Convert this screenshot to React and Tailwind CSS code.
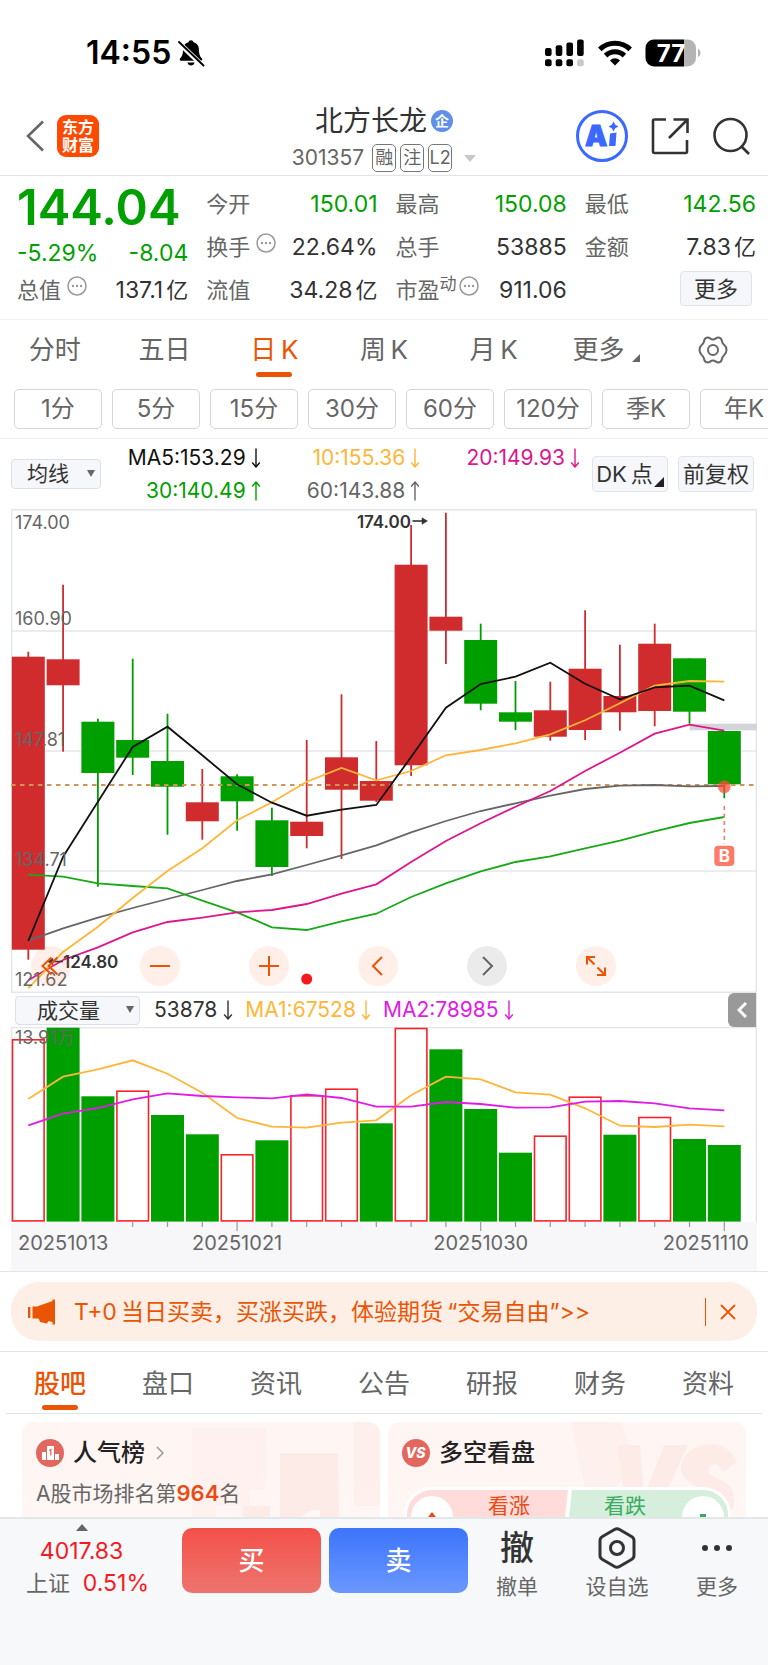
import React from "react";

const RED = "#d02c2e";
const GREEN = "#009f00";
const STEP = 34.8;
const FIRST = 17.3;
const cx = (i) => FIRST + STEP * i;

// [direction, high, body top, body bottom, low]
const candles = [
  ["r", 142.7, 147.7, 440.7, 450.7],
  ["r", 75.7, 150.3, 176.3, 242.7],
  ["g", 209.7, 212.7, 264, 377.7],
  ["g", 149.7, 231, 248.7, 266],
  ["g", 204.7, 252, 277.7, 325.7],
  ["r", 260, 293.3, 312.3, 330.7],
  ["g", 265.3, 267.3, 292.3, 321.7],
  ["g", 298.7, 311.3, 358, 367],
  ["r", 231, 312.7, 327, 339.3],
  ["r", 185.3, 248.3, 280.7, 350],
  ["r", 232, 272, 291.7, 293],
  ["r", 16, 55.7, 256.3, 267],
  ["r", 3.7, 107.7, 121.7, 155],
  ["g", 114.7, 131, 194.7, 201.3],
  ["g", 172, 203.3, 212.7, 221],
  ["r", 172.7, 201.3, 227.7, 231.7],
  ["r", 101.3, 159.7, 221, 231],
  ["r", 135.7, 187, 203.3, 221.7],
  ["r", 114.7, 134.7, 202, 217.3],
  ["g", 149.3, 149.3, 202.7, 214.7],
  ["g", 222, 222, 275.3, 289.3],
];

const priceLines = [
  ["#666666", [431.7, 419.3, 408.7, 399, 390, 381, 372, 365.3, 356, 346.3, 336.3, 323.3, 312, 302, 294.3, 286.7, 280, 276.7, 276, 277.3, 277]],
  ["#18a818", [365.7, 367.7, 374.3, 377, 379.3, 391.7, 403.3, 418.3, 421, 412.3, 404.7, 388, 374.3, 362.3, 353, 347.3, 339.3, 331.7, 322.3, 314, 308]],
  ["#e0148c", [471.3, 451, 438.3, 423.3, 413, 408.7, 403.3, 401, 395, 384.7, 375.3, 353, 332, 314.3, 297.7, 282, 262, 243.7, 224.7, 215.7, 221.7]],
  ["#ffb638", [479.3, 443, 417.7, 389, 362, 339.3, 311.3, 293.3, 272.7, 259, 271.3, 262, 246.3, 241, 234.3, 225.3, 211.3, 194.3, 176.7, 172, 172.7]],
  ["#111111", [432, 347.7, 292.7, 238, 217.7, 246.3, 275.3, 293.7, 306.7, 300.7, 296, 248, 198.7, 175, 167.7, 153.7, 174.7, 190.3, 178.3, 176.7, 191.3]],
];

const volumes = [
  ["r", 12.3], ["g", 0.7], ["g", 69.3], ["r", 63.7], ["g", 88], ["g", 107.3], ["r", 127.3],
  ["g", 113.3], ["r", 68.3], ["r", 61.7], ["g", 96.3], ["r", 1], ["g", 22.3], ["g", 82],
  ["g", 125.7], ["r", 108.7], ["r", 69.7], ["g", 107.7], ["r", 90], ["g", 112], ["g", 118],
];

const volumeLines = [
  ["#ffb638", [72, 49.7, 42.3, 33.3, 46.7, 65.7, 91, 99.7, 100.7, 95.7, 93.3, 68.3, 49.7, 52.3, 65.3, 67.7, 81.3, 98.7, 100, 97.7, 99.3]],
  ["#e01be6", [98.3, 86.7, 81, 72.3, 66.3, 69, 70.3, 71.3, 67.3, 71, 79.7, 79.7, 75, 77, 80.7, 80.3, 74.7, 74, 76.3, 81.3, 83.3]],
];

const toPoints = (ys) => ys.map((y, i) => `${cx(i)},${y}`).join(" ");

function Arrow({ up }) {
  return (
    <svg viewBox="0 0 10 20" className="h-5 w-[10px] shrink-0" fill="none" stroke="currentColor" strokeWidth="1.4">
      <path d={up ? "M5 19.5V1M1.2 5.5 5 1l3.8 4.5" : "M5 .5V19M1.2 14.5 5 19l3.8-4.5"} />
    </svg>
  );
}

function StatusBar() {
  return (
    <div className="flex h-[99px] items-center justify-between pt-[7px] pr-[67px] pl-[86px]">
      <div className="flex items-center gap-1.5">
        <span className="text-[32px] leading-8 font-semibold text-black">14:55</span>
        <svg viewBox="0 0 28 28" className="size-7" fill="#000">
          <path d="M14 1.2c-1.4 0-2.3.9-2.5 2C8 4.100 6 7 6 11c0 4.800-1.200 6.700-2.800 8.300-.9.9-.4 2.500.9 2.500h19.800c1.300 0 1.800-1.600.9-2.500C23.200 17.700 22 15.800 22 11c0-4-2-6.900-5.500-7.800-.2-1.100-1.100-2-2.500-2zM10.400 23.600c.5 1.800 1.900 3 3.600 3s3.100-1.200 3.600-3z" />
          <path d="M1.500 3.500 25.500 26.500" stroke="#fff" strokeWidth="5" />
          <path d="M2 3 26.500 26.500" stroke="#000" strokeWidth="1.900" strokeLinecap="round" />
        </svg>
      </div>
      <div className="flex items-center gap-[13px]">
        <svg viewBox="0 0 40 28" className="h-7 w-10">
          <rect x="0" y="9" width="6.600" height="8" rx="2" />
          <rect x="10.700" y="6.300" width="6.600" height="10.700" rx="2" />
          <rect x="21.400" y="3.500" width="6.600" height="13.500" rx="2" />
          <rect x="32.100" y="0.600" width="6.600" height="16.400" rx="2" />
          <rect x="0" y="20.300" width="6.600" height="7" rx="2" />
          <rect x="10.700" y="20.300" width="6.600" height="7" rx="2" />
          <rect x="21.400" y="20.300" width="6.600" height="7" rx="2" />
          <rect x="32.100" y="20.300" width="6.600" height="7" rx="2" fill="#c8c8c8" />
        </svg>
        <svg viewBox="0 0 34 26" className="h-[26px] w-[34px]" fill="none" stroke="#000" strokeWidth="5">
          <path d="M1.800 9.400a21.800 21.800 0 0 1 30.400 0" />
          <path d="M7.600 15.600a13.400 13.400 0 0 1 18.800 0" />
          <path d="M17 25.600l-5-5.200a7 7 0 0 1 10 0z" fill="#000" stroke="none" />
        </svg>
        <svg viewBox="0 0 56 28" className="h-7 w-14">
          <path d="M9 .5h33.500a8.500 8.500 0 0 1 8.500 8.500v10a8.500 8.500 0 0 1-8.500 8.500H39V.5z" fill="#b4b4b4" />
          <path d="M9 .5h30v27H9A8.500 8.500 0 0 1 .5 19V9A8.500 8.500 0 0 1 9 .5z" fill="#000" />
          <path d="M53 10c1.600.6 2.600 2.200 2.600 4s-1 3.400-2.600 4z" fill="#b4b4b4" />
          <text x="26" y="22.500" textAnchor="middle" fill="#fff" fontSize="24" fontWeight="700" fontFamily="Inter, sans-serif">77</text>
        </svg>
      </div>
    </div>
  );
}

function Header() {
  const tag = "flex h-7 w-6 items-center justify-center rounded-[5px] border border-[#777] text-lg leading-none text-[#666]";
  return (
    <header className="grid grid-cols-[1fr_auto_1fr] items-center border-b border-[#e3e4e8] pb-[3px]">
      <div className="flex items-center gap-3 pl-[25px]">
        <button aria-label="返回" className="p-0">
          <svg viewBox="0 0 20 32" className="h-8 w-5" fill="none" stroke="#666" strokeWidth="2.600"><path d="M18 1.500 3 16l15 14.500" /></svg>
        </button>
        <a href="#home" aria-label="东方财富" className="flex size-[42px] flex-col items-center justify-center rounded-[9px] bg-[#ff4800] text-base leading-[18px] font-bold text-white">
          <span>东方</span>
          <span>财富</span>
        </a>
      </div>
      <div className="flex flex-col items-center gap-[3px] pt-0.5">
        <div className="flex items-center gap-1">
          <h1 className="text-[28px] leading-10 text-[#333]">北方长龙</h1>
          <span className="flex size-[22px] items-center justify-center rounded-full bg-[#5f8fe8] text-sm leading-none font-bold text-white">企</span>
        </div>
        <div className="flex items-center gap-1">
          <span className="pr-1 text-[21px] leading-7 text-[#666]">301357</span>
          <span className={tag}>融</span>
          <span className={tag}>注</span>
          <span className={tag}>L2</span>
          <svg viewBox="0 0 12 7" className="ml-2 h-[7px] w-3" fill="#c8c8cc"><path d="M0 0h12L6 7z" /></svg>
        </div>
      </div>
      <div className="flex items-center justify-end gap-[23px] pr-[18px]">
        <button aria-label="AI 助手">
          <svg viewBox="0 0 52 52" className="size-[52px]">
            <circle cx="26" cy="26" r="24.500" fill="#fff" stroke="#3b68ff" strokeWidth="3" />
            <text x="9" y="36" fill="#3b68ff" stroke="#3b68ff" strokeWidth="1" fontSize="28" fontWeight="900" fontFamily="Inter, sans-serif">A</text>
            <path d="M34 23.500l6.500-1-1 13.500h-6.500z" fill="#3b68ff" />
            <path d="M37.500 11.500l1.700 3.300 3.300 1.700-3.300 1.700-1.700 3.300-1.700-3.300-3.300-1.700 3.300-1.700z" fill="#3b68ff" />
          </svg>
        </button>
        <button aria-label="分享">
          <svg viewBox="0 0 38 38" className="size-[38px]" fill="none" stroke="#333" strokeWidth="2.600">
            <path d="M15 2.500H3.500a1.500 1.500 0 0 0-1.500 1.500v30.500A1.500 1.500 0 0 0 3.500 36h31a1.500 1.500 0 0 0 1.500-1.500V23" />
            <path d="M22.500 2.500H36.500V16M36 3 18 21" />
          </svg>
        </button>
        <button aria-label="搜索">
          <svg viewBox="0 0 38 38" className="size-[38px]" fill="none" stroke="#333" strokeWidth="2.600">
            <circle cx="18.500" cy="18" r="16" /><path d="M29 29l8 8" />
          </svg>
        </button>
      </div>
    </header>
  );
}

function Dots() {
  return (
    <svg viewBox="0 0 20 20" className="size-5 shrink-0 self-start" fill="none" stroke="#999" strokeWidth="1.500">
      <circle cx="10" cy="10" r="9" />
      <g fill="#999" stroke="none"><circle cx="6" cy="10" r="1.200" /><circle cx="10" cy="10" r="1.200" /><circle cx="14" cy="10" r="1.200" /></g>
    </svg>
  );
}

function Stat({ label, sup, dots, value, unit, green }) {
  return (
    <div className="flex h-8 items-center justify-between leading-8">
      <span className="flex h-8 items-center text-[22px] text-[#666]">
        {label}
        {sup && <span className="self-start text-[17px] leading-5">{sup}</span>}
        {dots && <span className={sup ? "ml-0.5 flex h-7" : "ml-1.5 flex h-7"}><Dots /></span>}
      </span>
      <span className={green ? "text-[23px] text-[#00a000]" : "text-[23px] text-[#333]"}>
        {value}
        {unit && <span className="ml-[3px] text-[22px]">{unit}</span>}
      </span>
    </div>
  );
}

function Quote() {
  return (
    <section className="grid grid-cols-4 gap-x-[18px] border-b border-[#f0f0f3] pt-3 pr-3 pb-[13px] pl-[17px]">
      <div className="flex flex-col">
        <div className="h-10 text-[49px] leading-10 font-semibold text-[#00a000]">144.04</div>
        <div className="mt-[9px] mb-[5px] flex justify-between text-[23px] leading-8 text-[#00a000]">
          <span>-5.29%</span><span>-8.04</span>
        </div>
        <Stat label="总值" dots value="137.1" unit="亿" />
      </div>
      <div className="flex flex-col gap-[11px]">
        <Stat label="今开" value="150.01" green />
        <Stat label="换手" dots value="22.64%" />
        <Stat label="流值" value="34.28" unit="亿" />
      </div>
      <div className="flex flex-col gap-[11px]">
        <Stat label="最高" value="150.08" green />
        <Stat label="总手" value="53885" />
        <Stat label="市盈" sup="动" dots value="911.06" />
      </div>
      <div className="flex flex-col gap-[11px]">
        <Stat label="最低" value="142.56" green />
        <Stat label="金额" value="7.83" unit="亿" />
        <button className="-mt-[3px] mr-1 h-[35px] w-[72px] self-end rounded-sm border border-[#dfe2e8] bg-[#f6f7fa] text-[22px] leading-8 text-[#333]">更多</button>
      </div>
    </section>
  );
}

function PeriodTabs() {
  const tabs = ["分时", "五日", "日\u2009K", "周\u2009K", "月\u2009K"];
  return (
    <nav className="grid grid-cols-7 pt-2.5 text-[26px] leading-10">
      {tabs.map((t, i) => (
        <button key={t} className={i === 2 ? "flex flex-col items-center text-[#ea5504]" : "flex flex-col items-center text-[#666]"}>
          {t}
          {i === 2 && <span className="mt-0.5 h-[5px] w-9 rounded-full bg-[#ea5504]" />}
        </button>
      ))}
      <button className="flex h-10 items-center justify-center gap-2 pl-1.5 text-[#666]">
        更多
        <svg viewBox="0 0 8 8" className="mt-4 size-2" fill="#666"><path d="M8 0v8H0z" /></svg>
      </button>
      <button aria-label="设置" className="flex h-10 items-center justify-center">
        <svg viewBox="0 0 30 28" className="h-7 w-[30px]" fill="none" stroke="#666" strokeWidth="2" strokeLinejoin="round">
          <circle cx="15" cy="14" r="5" />
          <path d="M10 1.500c1.800 0 2.500 2 5 2s3.200-2 5-2c2.400 0 3.300 1 3.800 3 .5 2.200.4 2.900 2.300 4.300 1.600 1.300 2.400 2 2.400 5.200s-.8 3.900-2.400 5.200c-1.900 1.400-1.800 2.100-2.300 4.300-.5 2-1.400 3-3.800 3-1.800 0-2.500-2-5-2s-3.200 2-5 2c-2.400 0-3.300-1-3.800-3-.5-2.200-.4-2.900-2.300-4.300C2.300 17.900 1.500 17.200 1.500 14s.8-3.900 2.400-5.200c1.900-1.400 1.800-2.100 2.300-4.300.5-2 1.400-3 3.800-3z" />
        </svg>
      </button>
    </nav>
  );
}

function MinutePills() {
  const pills = ["1分", "5分", "15分", "30分", "60分", "120分", "季K", "年K"];
  return (
    <div className="flex gap-[10px] overflow-hidden border-b border-[#f0f0f3] pt-3 pb-[9px] pl-3.5">
      {pills.map((p) => (
        <button key={p} className="h-10 w-[88px] shrink-0 rounded-[5px] border border-[#d5d6da] text-2xl leading-9 text-[#666]">{p}</button>
      ))}
    </div>
  );
}

function MaLegend() {
  const cell = "flex items-center justify-end gap-[5px]";
  const box = "h-9 w-[76px] shrink-0 rounded-sm border border-[#e1e4ea] bg-[#f6f7fa] text-[22px] leading-8 text-[#333]";
  return (
    <div className="flex items-center pt-0.5 pr-[14px] pb-0.5 pl-[11px]">
      <div className="relative h-[30px] w-[90px] shrink-0">
        <select aria-label="指标" className="size-full appearance-none rounded-sm border border-[#dcdfe8] bg-[#f6f7fa] pl-[15px] text-[21px] leading-7 text-[#333]">
          <option>均线</option>
        </select>
        <svg viewBox="0 0 8 7" className="pointer-events-none absolute top-[11px] right-1.5 h-[7px] w-2" fill="#666"><path d="M0 0h8L4 7z" /></svg>
      </div>
      <div className="grid flex-1 grid-cols-3 pr-3 text-[21px] leading-[33px]">
        <span className={`${cell} text-[#111]`}>MA5:153.29<Arrow /></span>
        <span className={`${cell} text-[#ffb638]`}>10:155.36<Arrow /></span>
        <span className={`${cell} text-[#e0148c]`}>20:149.93<Arrow /></span>
        <span className={`${cell} text-[#00a000]`}>30:140.49<Arrow up /></span>
        <span className={`${cell} text-[#666]`}>60:143.88<Arrow up /></span>
      </div>
      <div className="flex gap-2.5">
        <button className={`${box} flex items-center justify-center gap-px`}>
          DK{"\u2009"}点
          <svg viewBox="0 0 10 10" className="mt-4 size-2.5" fill="#222"><path d="M10 0v10H0z" /></svg>
        </button>
        <button className={box}>前复权</button>
      </div>
    </div>
  );
}

const SVG_FONT = 'Inter, "Noto Sans CJK SC", sans-serif';

function RoundButton({ label, gray, children }) {
  return (
    <button
      aria-label={label}
      className={gray
        ? "flex size-10 items-center justify-center rounded-full bg-[#00000014] text-[#666]"
        : "flex size-10 items-center justify-center rounded-full bg-[#ff641a1a] text-[#ea5504]"}
    >
      <svg viewBox="0 0 24 24" className="size-6" fill="none" stroke="currentColor" strokeWidth="2">{children}</svg>
    </button>
  );
}

function PriceChart() {
  const labels = [["174.00", 20], ["160.90", 115.500], ["147.81", 237], ["134.71", 356.500], ["121.62", 477]];
  return (
    <div className="relative mx-[11px]">
      <svg viewBox="0 0 746 484" className="block w-full" fontFamily={SVG_FONT}>
        <g stroke="#e4e6ee" strokeWidth="1.400">
          <path d="M.7.7h744.600v482.600H.7z" fill="none" />
          <path d="M0 122h746M0 242h746M0 362h746" strokeWidth="1.600" />
        </g>
        <rect x="678.700" y="214.700" width="67.300" height="6.600" fill="#d3d5da" />
        {candles.map(([d, hi, top, bot, lo], i) => (
          <g key={i} fill={d === "r" ? RED : GREEN}>
            <rect x={cx(i) - 0.9} y={hi} width="1.800" height={lo - hi} />
            <rect x={cx(i) - 16.5} y={top} width="33" height={bot - top} />
          </g>
        ))}
        <path d="M0 276h746" stroke="#cf9558" strokeWidth="1.800" strokeDasharray="4.500 4.500" />
        {priceLines.map(([c, ys]) => (
          <polyline key={c} points={toPoints(ys)} fill="none" stroke={c} strokeWidth="1.800" />
        ))}
        <g fill="#666" fontSize="18">
          {labels.map(([t, y]) => <text key={t} x="4" y={y}>{t}</text>)}
        </g>
        <g fill="#333" fontSize="17" fontWeight="600">
          <text x="400" y="18.500" textAnchor="end">174.00</text>
          <text x="52" y="458.500">124.80</text>
        </g>
        <g stroke="#333" strokeWidth="1.600" fill="#333">
          <path d="M401.500 12h12" /><path d="M411 8.800 416.500 12l-5.500 3.200z" strokeWidth=".5" />
          <path d="M40 452.500h12" /><path d="M42 449.300 36.500 452.500l5.500 3.200z" strokeWidth=".5" />
        </g>
        <circle cx={cx(8)} cy="470" r="5.500" fill="#f4191f" />
        <circle cx={cx(20)} cy="277.700" r="6.400" fill="#ff4a33" fillOpacity=".72" />
        <path d="M713.300 297v38" stroke="#ff7a66" strokeWidth="1.600" strokeDasharray="4 3.500" />
        <rect x="703.300" y="336.700" width="20" height="20.300" rx="4" fill="#ff7a66" />
        <text x="713.300" y="353" textAnchor="middle" fill="#fff" fontSize="17" fontWeight="700">B</text>
      </svg>
      <div className="absolute bottom-[7px] left-5 flex gap-[69px]">
        <RoundButton label="最早"><path d="M12.500 3.500 3.500 12l9 8.500M18.500 3.500l-9 8.500 9 8.500" /></RoundButton>
        <RoundButton label="缩小"><path d="M2 12h20" /></RoundButton>
        <RoundButton label="放大"><path d="M2 12h20M12 2v20" /></RoundButton>
        <RoundButton label="左移"><path d="M16 3 7 12l9 9" /></RoundButton>
        <RoundButton label="右移" gray><path d="M8 3l9 9-9 9" /></RoundButton>
        <RoundButton label="全屏"><path d="M3 10.500V3h8M3.500 3.500l7 7M21 13.500V21h-8M20.500 20.500l-7-7" /></RoundButton>
      </div>
    </div>
  );
}

function VolumeHeader() {
  return (
    <div className="mx-[11px] flex h-[34px] items-center border-r border-[#e4e6ee] pl-1 text-[21px] leading-7">
      <div className="relative h-[29px] w-[125px] shrink-0">
        <select aria-label="副图指标" className="size-full appearance-none rounded-sm border border-[#dcdfe8] bg-[#f6f7fa] pl-[21px] text-[21px] leading-7 text-[#333]">
          <option>成交量</option>
        </select>
        <svg viewBox="0 0 8 7" className="pointer-events-none absolute top-[10px] right-1.5 h-[7px] w-2" fill="#666"><path d="M0 0h8L4 7z" /></svg>
      </div>
      <span className="ml-3.5 flex items-center gap-1.5 text-[#333]">53878<Arrow /></span>
      <span className="ml-3 flex items-center gap-[5px] text-[#ffb638]">MA1:67528<Arrow /></span>
      <span className="ml-3 flex items-center gap-[5px] text-[#e01be6]">MA2:78985<Arrow /></span>
      <button aria-label="收起" className="ml-auto flex h-full w-7 items-center justify-center rounded-l-md bg-[#999]">
        <svg viewBox="0 0 10 16" className="h-4 w-2.5" fill="none" stroke="#fff" strokeWidth="3"><path d="M9 1 2 8l7 7" /></svg>
      </button>
    </div>
  );
}

function VolumeChart() {
  return (
    <div className="mx-[11px]">
      <svg viewBox="0 0 746 244" className="block w-full" fontFamily={SVG_FONT}>
        <rect x="0" y="195" width="746" height="49" fill="#f7f7fa" />
        <path d="M.7 195V.6h744.600V195" fill="none" stroke="#e4e6ee" strokeWidth="1.400" />
        {volumes.map(([d, top], i) =>
          d === "g" ? (
            <rect key={i} x={cx(i) - 16.5} y={top} width="33" height={194.6 - top} fill={GREEN} />
          ) : (
            <rect key={i} x={cx(i) - 15.8} y={top + 0.5} width="31.600" height={193.4 - top} fill="#fff" stroke="#f8232a" strokeWidth="1.600" />
          )
        )}
        {volumeLines.map(([c, ys]) => (
          <polyline key={c} points={toPoints(ys)} fill="none" stroke={c} strokeWidth="1.800" />
        ))}
        {volumes.map((_, i) =>
          i < 3 ? null : <path key={i} d={`M${cx(i)} 195v${(i + 1) % 7 === 0 ? 9 : 5}`} stroke="#999" strokeWidth="1.200" />
        )}
        <text x="4" y="17.300" fill="#666" fontSize="18">13.91万</text>
        <g fill="#666" fontSize="20">
          <text x="7" y="223">20251013</text>
          <text x={cx(6)} y="223" textAnchor="middle">20251021</text>
          <text x={cx(13)} y="223" textAnchor="middle">20251030</text>
          <text x="738" y="223" textAnchor="end">20251110</text>
        </g>
      </svg>
    </div>
  );
}

function Banner() {
  return (
    <div className="border-y border-[#e3e4e8] px-[11px] py-[10px]">
      <div className="flex h-[59px] items-center rounded-[28px] bg-[#fdeee6] pr-[21px] pl-[17px] text-[#ea5504]">
        <svg viewBox="0 0 28 26" className="h-[26px] w-7 shrink-0" fill="currentColor">
          <path d="M0 8h2.400v11H0zM4.500 7.500H9L24.500 2V.5H27v25h-2.500V23l-4-1-1.500 2.500-7-1.500-1-3-1.500-.500H4.500z" />
        </svg>
        <a href="#t0" className="ml-[18px] text-[23px] leading-8 whitespace-nowrap">T+0{"\u2009"}当日买卖，买涨买跌，体验期货{"\u2009"}“交易自由”&gt;&gt;</a>
        <span className="ml-auto h-7 w-px bg-[#ea5504]" />
        <button aria-label="关闭" className="ml-3.5">
          <svg viewBox="0 0 16 16" className="size-4" fill="none" stroke="currentColor" strokeWidth="1.800"><path d="M1 1l14 14M15 1 1 15" /></svg>
        </button>
      </div>
    </div>
  );
}

function InfoTabs() {
  const tabs = ["股吧", "盘口", "资讯", "公告", "研报", "财务", "资料"];
  return (
    <nav className="mx-1.5 grid grid-cols-7 border-b border-[#e3e4e8] pt-3 text-[26px] leading-10">
      {tabs.map((t, i) => (
        <button key={t} className={i === 0 ? "flex h-[49px] flex-col items-center font-medium text-[#ea5504]" : "flex h-[49px] flex-col items-center text-[#666]"}>
          {t}
          {i === 0 && <span className="mt-px h-[5px] w-9 rounded-full bg-[#ea5504]" />}
        </button>
      ))}
    </nav>
  );
}

function Cards() {
  const card = "relative overflow-hidden rounded-xl bg-gradient-to-b from-[#fff5f3] to-[#fff9f7]";
  return (
    <section className="grid min-h-0 flex-1 grid-cols-2 gap-2 overflow-hidden bg-white px-[22px] pt-2">
      <div className={`${card} h-48`}>
        <svg viewBox="0 0 358 192" className="absolute inset-0 w-full" fill="#fdebe8">
          <path d="M170 6h74v62h-16v16h-34v58h-24z" fillOpacity=".45" />
          <path d="M332 0h26v84h-26z" fillOpacity=".6" />
          <path d="M221 84h27v108h-27zM258 31h58l3 161h-61zM329 110h23v82h-23z" />
          <path d="M274 98l16-10h8v60h-14v-42l-10 5z" fill="#fff8f6" />
        </svg>
        <div className="relative pt-[13px] pl-[14px]">
          <div className="flex items-center gap-[9px]">
            <svg viewBox="0 0 28 28" className="size-7">
              <circle cx="14" cy="14" r="14" fill="#e2685f" />
              <path d="M6 13h4v8H6zM11 7h7v14h-7zM19 15h4v6h-4z" fill="#fff" />
              <path d="M13.300 11.500l1.500-1v6" stroke="#e2685f" strokeWidth="1.300" fill="none" />
            </svg>
            <h2 className="text-2xl leading-9 font-medium text-[#222]">人气榜</h2>
            <svg viewBox="0 0 8 14" className="ml-0.5 h-3.5 w-2" fill="none" stroke="#999" strokeWidth="1.500"><path d="M1 1l6 6-6 6" /></svg>
          </div>
          <p className="mt-1.5 text-[21px] leading-8 text-[#666]">A股市场排名第<b className="text-[22px] font-semibold text-[#ea4a14]">964</b>名</p>
        </div>
      </div>
      <div className={`${card} h-48`}>
        <svg viewBox="0 0 358 192" className="absolute inset-0 w-full" fill="#fdebe8">
          <path d="M183 0h50l30 90-25-40-33 55z" fillOpacity=".55" />
          <path d="M230 23h22l4 52 20-52h24l-32 70h-30z" />
          <path d="M349 40c-8-20-34-24-50-8-14 16-2 28 14 34 12 5 10 14-4 16v22c26 0 42-16 36-34-4-14-28-14-24-24 4-7 12-2 14 4z" />
        </svg>
        <div className="relative pt-[13px] pl-[14px]">
          <div className="flex items-center gap-[9px]">
            <svg viewBox="0 0 28 28" className="size-7">
              <circle cx="14" cy="14" r="14" fill="#e2685f" />
              <text x="13.500" y="19" textAnchor="middle" fill="#fff" fontSize="14" fontWeight="800" fontStyle="italic" fontFamily="Inter, sans-serif">VS</text>
            </svg>
            <h2 className="text-2xl leading-9 font-medium text-[#222]">多空看盘</h2>
          </div>
        </div>
        <div className="relative mt-4 mr-[15px] ml-4 flex h-14 overflow-hidden rounded-[28px] border-3 border-white">
          <svg viewBox="0 0 322 50" className="absolute inset-0 h-full w-full" preserveAspectRatio="none">
            <path d="M0 0h163l-4 50H0z" fill="#ffdcd9" /><path d="M163 0h159v50H157z" fill="#d5efdc" />
            <path d="M163.500 0 158 50" stroke="#fff" strokeWidth="4" />
          </svg>
          <button className="relative flex flex-1 items-start pl-1 text-[21px] leading-8 text-[#ea4a14]">
            <span className="mt-1.5 flex size-[42px] justify-center rounded-full bg-white pt-4">
              <svg viewBox="0 0 14 18" className="h-[18px] w-3.5" fill="#ea4a14"><path d="M7 0l7 9h-4v9H4V9H0z" /></svg>
            </span>
            <span className="ml-[35px]">看涨</span>
          </button>
          <button className="relative flex flex-1 items-start justify-end pr-1 text-[21px] leading-8 text-[#3bab62]">
            <span className="mr-9">看跌</span>
            <span className="mt-1.5 flex size-[42px] justify-center rounded-full bg-white pt-[18px]">
              <svg viewBox="0 0 14 18" className="h-[18px] w-3.5" fill="#3bab62"><path d="M7 18l7-9h-4V0H4v9H0z" /></svg>
            </span>
          </button>
        </div>
      </div>
    </section>
  );
}

function BottomBar() {
  const act = "flex flex-col items-center text-[21px] leading-8 text-[#666]";
  const trade = "h-[65px] w-[139px] rounded-[10px] bg-gradient-to-b text-[26px] leading-10 font-medium text-white";
  return (
    <footer className="flex h-[148px] shrink-0 items-start border-t-2 border-[#e4e7ea] bg-[#f6f8fa] pr-[30px] pl-[26px]">
      <button className="flex w-[123px] flex-col text-[22px] leading-8">
        <span className="flex flex-col items-center pr-3">
          <svg viewBox="0 0 12 7" className="mt-[5px] h-[7px] w-3" fill="#666"><path d="M0 7h12L6 0z" /></svg>
          <span className="mt-1 text-[23px] text-[#f8181f]">4017.83</span>
        </span>
        <span className="flex w-full justify-between text-[#666]">上证<span className="text-[23px] text-[#f8181f]">0.51%</span></span>
      </button>
      <div className="mt-[9px] ml-[33px] flex gap-2">
        <button className={`${trade} from-[#f44f49] to-[#ec746d]`}>买</button>
        <button className={`${trade} from-[#3c74fb] to-[#6b97fe]`}>卖</button>
      </div>
      <div className="mt-2 flex flex-1 justify-between pl-[28px]">
        <button className={act}><span className="flex h-[42px] items-center text-[34px] leading-[42px] font-medium text-[#333]">撤</span><span className="mt-0.5">撤单</span></button>
        <button className={act}>
          <svg viewBox="0 0 38 42" className="h-[42px] w-[38px]" fill="none" stroke="#333" strokeWidth="3" strokeLinejoin="round">
            <path d="M16.500 2.500q2.500-1.400 5 0l12 7q2.500 1.400 2.500 4v15q0 2.600-2.500 4l-12 7q-2.500 1.400-5 0l-12-7Q2 31.100 2 28.500v-15q0-2.600 2.500-4z" />
            <circle cx="19" cy="21" r="6.500" />
          </svg>
          <span className="mt-0.5">设自选</span>
        </button>
        <button className={act}>
          <svg viewBox="0 0 32 42" className="h-[42px] w-8" fill="#333"><circle cx="4" cy="21" r="3" /><circle cx="16" cy="21" r="3" /><circle cx="28" cy="21" r="3" /></svg>
          <span className="mt-0.5">更多</span>
        </button>
      </div>
    </footer>
  );
}

export default function App() {
  return (
    <div className="flex h-screen flex-col overflow-hidden bg-white font-['Inter','Noto_Sans_CJK_SC',sans-serif]">
      <StatusBar />
      <Header />
      <Quote />
      <PeriodTabs />
      <MinutePills />
      <MaLegend />
      <PriceChart />
      <VolumeHeader />
      <VolumeChart />
      <Banner />
      <InfoTabs />
      <Cards />
      <BottomBar />
    </div>
  );
}
